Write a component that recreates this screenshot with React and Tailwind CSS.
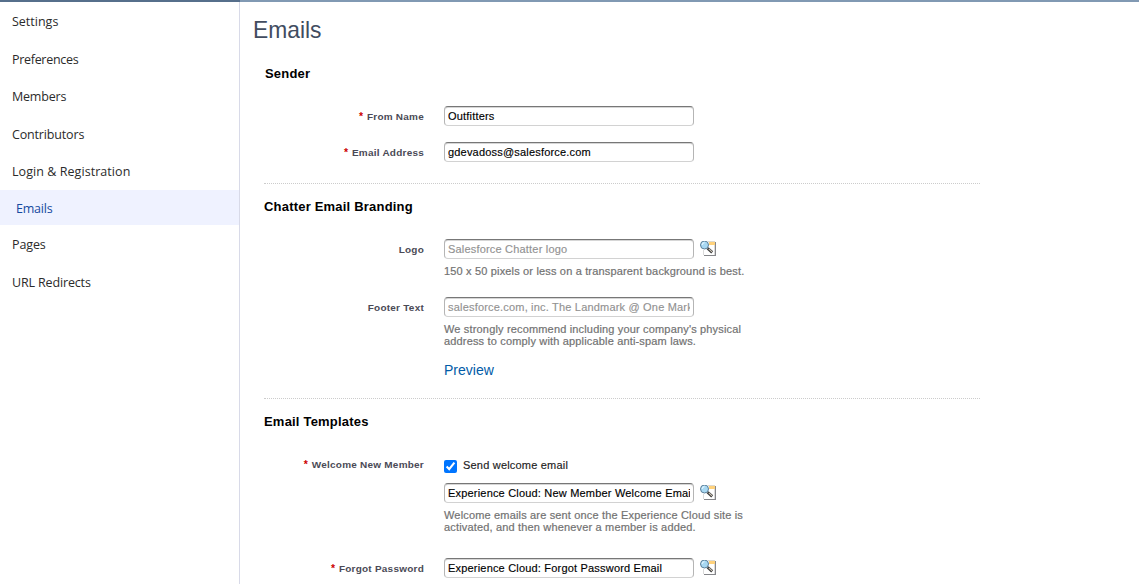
import React from "react";

const navItems = [
  { label: "Settings", cls: "mt-[10px] tracking-[0px]" },
  { label: "Preferences", cls: "mt-[18px] tracking-[-0.3px]" },
  { label: "Members", cls: "mt-[17px] tracking-[-0.2px]" },
  { label: "Contributors", cls: "mt-[18px] tracking-[-0.16px]" },
  { label: "Login & Registration", cls: "mt-[17px] tracking-[0.06px]" },
  { label: "Emails", active: true },
  { label: "Pages", cls: "mt-[10px] tracking-[-0.1px]" },
  { label: "URL Redirects", cls: "mt-[18px] tracking-[-0.15px]" },
];

function LookupIcon() {
  return (
    <svg width="17" height="16" viewBox="0 0 17 16" className="ml-[6px] mt-[2px] shrink-0" shapeRendering="crispEdges">
      <path d="M3 1h12v13H3z" fill="#fff" />
      <path d="M8 0h7v1H8z" fill="#dcd9d2" />
      <path d="M9 1h6v3H9z" fill="#ffd27c" />
      <path d="M3 9h1v5H3zM14 4h1v10h-1z" fill="#dadada" />
      <path d="M15 1h1v13h-1zM4 14h12v1H4z" fill="#85868a" />
      <g shapeRendering="auto">
        <path d="M7.6 7.2l4.6 4.2" stroke="#3a3a3a" strokeWidth="2.8" />
        <path d="M8.8 7.9l3.2 2.9" stroke="#d6cdbd" strokeWidth="1.1" />
        <circle cx="4.5" cy="4" r="4" fill="#a8d8f2" stroke="#5c7f99" strokeWidth="1" />
        <path d="M2.2 4a2.3 2.3 0 0 1 2.3-2.3" fill="none" stroke="#def3ff" strokeWidth="1.3" />
      </g>
    </svg>
  );
}

function Label({ children, required, raised }) {
  return (
    <div className={`w-[184px] shrink-0 origin-right scale-x-[1.05] whitespace-nowrap text-right text-[9.5px] font-bold leading-[20px] tracking-[0.23px] text-[#4a4a56] ${raised ? "pt-0" : "pt-[1px]"}`}>
      {required && <span className="mr-[3.5px] text-[10px] text-[#cc0000]">*</span>}
      {children}
    </div>
  );
}

function Field({ value, muted, lookup }) {
  return (
    <div className="flex h-[20px]">
      <input
        type="text"
        defaultValue={value}
        className={`h-[20px] w-[250px] rounded-[4px] border border-t-[#777777] border-x-[#b5b5b5] border-b-[#d2d2d2] bg-white px-[3px] text-[11px] tracking-[0.19px] shadow-[inset_0_1px_0_#d6d6d6] outline-none [-webkit-text-stroke:0.15px] ${muted ? "text-[#929292]" : "text-black"}`}
      />
      {lookup && <LookupIcon />}
    </div>
  );
}

function Row({ label, required, raised, className = "", children }) {
  return (
    <div className={`-ml-6 flex ${className}`}>
      <Label required={required} raised={raised}>{label}</Label>
      <div className="ml-[20px]">{children}</div>
    </div>
  );
}

function Help({ children }) {
  return <div className="mt-[6px] whitespace-nowrap text-[11px] leading-[12px] tracking-[0.165px] text-[#727272] [-webkit-text-stroke:0.2px]">{children}</div>;
}

function Heading({ children, className = "" }) {
  return <h2 className={`h-[16px] text-[13px] font-bold leading-[16px] tracking-[0.2px] text-black ${className}`}>{children}</h2>;
}

function Divider({ className = "" }) {
  return <div className={`h-px w-[716px] border-t border-dotted border-[#cccccc] ${className}`} />;
}

export default function App() {
  return (
    <div className="flex h-[584px] w-[1139px] overflow-hidden bg-white font-['Liberation_Sans',sans-serif]">
      <nav className="w-[240px] shrink-0 border-r border-[#d8dae8] font-['Open_Sans',sans-serif] text-[12.5px] text-[#2b2b2b]">
        <div className="h-[2px] w-[240px] bg-[#566f8b]" />
        {navItems.map(({ label, active, cls }) =>
          active ? (
            <div key={label} className="mt-[8px] flex h-[35px] items-center bg-[#eff2ff] pl-[16px] pt-[4px] tracking-[-0.2px] text-[#164aa0]">
              {label}
            </div>
          ) : (
            <div key={label} className={`h-[20px] pl-[12px] leading-[20px] ${cls}`}>
              {label}
            </div>
          )
        )}
      </nav>
      <main className="flex-1">
        <div className="h-[2px] bg-[#8199b3]" />
        <h1 className="ml-[13px] mt-[14px] h-[28px] origin-left scale-x-[0.95] text-[24px] leading-[28px] text-[#414c60]">Emails</h1>
        <div className="ml-[24px]">
          <Heading className="mt-[22px] pl-px">Sender</Heading>
          <Row label="From Name" required className="mt-[24px]">
            <Field value="Outfitters" />
          </Row>
          <Row label="Email Address" required className="mt-[15px]">
            <Field value="gdevadoss@salesforce.com" />
          </Row>
          <Divider className="mt-[20px]" />
          <Heading className="mt-[15px]">Chatter Email Branding</Heading>
          <Row label="Logo" className="mt-[24px]">
            <Field value="Salesforce Chatter logo" muted lookup />
            <Help>150 x 50 pixels or less on a transparent background is best.</Help>
          </Row>
          <Row label="Footer Text" className="mt-[20px]">
            <Field value="salesforce.com, inc. The Landmark @ One Market" muted />
            <Help>
              We strongly recommend including your company's physical
              <br />
              address to comply with applicable anti-spam laws.
            </Help>
            <a className="mt-[14px] block h-[18px] text-[14px] leading-[18px] text-[#015ba7]">Preview</a>
          </Row>
          <Divider className="mt-[19px]" />
          <Heading className="mt-[15px]">Email Templates</Heading>
          <Row label="Welcome New Member" required raised className="mt-[25px]">
            <label className="flex h-[20px] items-center text-[11px] tracking-[0.2px] text-[#222] [-webkit-text-stroke:0.15px]">
              <input type="checkbox" defaultChecked className="mr-[6px] mt-[3px] size-[13px]" />
              Send welcome email
            </label>
            <div className="mt-[8px]">
              <Field value="Experience Cloud: New Member Welcome Email" lookup />
            </div>
            <Help>
              Welcome emails are sent once the Experience Cloud site is
              <br />
              activated, and then whenever a member is added.
            </Help>
          </Row>
          <Row label="Forgot Password" required className="mt-[25px]">
            <Field value="Experience Cloud: Forgot Password Email" lookup />
          </Row>
        </div>
      </main>
    </div>
  );
}
